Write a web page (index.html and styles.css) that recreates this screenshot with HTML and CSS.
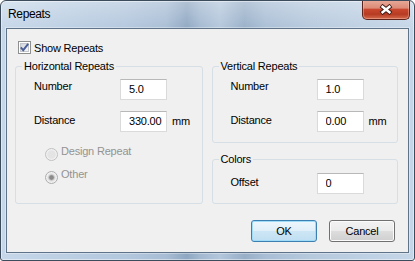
FILE: index.html
```html
<!DOCTYPE html>
<html lang="en">
<head>
  <meta charset="UTF-8" />
  <title>Repeats</title>
  <link rel="stylesheet" href="styles.css">
</head>
<body>
  <div class="window">
    <div class="titlebar">
      <span class="title">Repeats</span>
      <div class="close-btn">
        <svg width="14" height="11" viewBox="0 0 14 11">
          <path d="M2 1.5 L12 9.5 M12 1.5 L2 9.5" stroke="#3f1a14" stroke-width="4.4" fill="none"/>
          <path d="M2.6 2 L11.4 9 M11.4 2 L2.6 9" stroke="#fff" stroke-width="2.4" fill="none"/>
        </svg>
      </div>
    </div>

    <div class="client">
      <div class="check-row">
        <svg class="checkbox" width="13" height="13" viewBox="0 0 13 13">
          <defs>
            <linearGradient id="cbFill" x1="0" y1="0" x2="1" y2="1">
              <stop offset="0" stop-color="#cfd3d9"/>
              <stop offset="1" stop-color="#f9f9f9"/>
            </linearGradient>
          </defs>
          <rect x="0.5" y="0.5" width="12" height="12" fill="#fff" stroke="#8e8f8f"/>
          <rect x="2.5" y="2.5" width="8" height="8" fill="url(#cbFill)" stroke="#c3c7cd"/>
          <path d="M2.8 6.4 L5.2 9.2 L10.2 2.8" stroke="#4a5f97" stroke-width="1.9" fill="none"/>
        </svg>
        <span>Show Repeats</span>
      </div>

      <div class="columns">
        <div class="group group-horizontal">
          <span class="legend">Horizontal Repeats</span>
          <div class="fields">
            <span class="field-label">Number</span>
            <input class="textbox" type="text" value="5.0">
            <span></span>
            <span class="field-label low">Distance</span>
            <input class="textbox" type="text" value="330.00">
            <span class="unit">mm</span>
          </div>
          <div class="radios">
            <div class="radio-row">
              <svg class="radio" width="13" height="13" viewBox="0 0 13 13">
                <circle cx="6.5" cy="6.5" r="6" fill="#f1f1f1" stroke="#c0c0c0"/>
                <circle cx="6.5" cy="6.5" r="4.3" fill="#e4e4e4"/>
              </svg>
              <span>Design Repeat</span>
            </div>
            <div class="radio-row">
              <svg class="radio" width="13" height="13" viewBox="0 0 13 13">
                <circle cx="6.5" cy="6.5" r="6" fill="#f1f1f1" stroke="#acacac"/>
                <circle cx="6.5" cy="6.5" r="4.3" fill="#e2e2e2"/>
                <circle cx="6.5" cy="6.5" r="2.8" fill="#8a8a8a" stroke="#c9c9c9" stroke-width="0.8"/>
              </svg>
              <span>Other</span>
            </div>
          </div>
        </div>

        <div class="right-col">
          <div class="group group-vertical">
            <span class="legend">Vertical Repeats</span>
            <div class="fields">
              <span class="field-label">Number</span>
              <input class="textbox" type="text" value="1.0">
              <span></span>
              <span class="field-label low">Distance</span>
              <input class="textbox" type="text" value="0.00">
              <span class="unit">mm</span>
            </div>
          </div>
          <div class="group group-colors">
            <span class="legend">Colors</span>
            <div class="fields fields-colors">
              <span class="field-label low">Offset</span>
              <input class="textbox" type="text" value="0">
              <span></span>
            </div>
          </div>
        </div>
      </div>

      <div class="buttons">
        <button class="btn btn-default">OK</button>
        <button class="btn">Cancel</button>
      </div>
    </div>
  </div>
</body>
</html>
```

FILE: styles.css
```css
* {
  box-sizing: border-box;
}
body {
  margin: 0;
  background: #fff;
  font-family: "Liberation Sans", Arial, sans-serif;
  font-size: 11px;
  letter-spacing: -0.2px;
  color: #000;
}
.window {
  width: 415px;
  height: 261px;
  border: 1px solid #3d4c5c;
  border-radius: 6px 6px 3px 3px;
  padding: 0 5px 7px 5px;
  display: flex;
  flex-direction: column;
  overflow: hidden;
  background:
    linear-gradient(rgba(255,255,255,0.3), rgba(255,255,255,0) 30px),
    linear-gradient(90deg, #c6d7e9 0%, #bccfe3 15%, #b3c7dd 30%, #a8bdd5 40%, #8fa7c2 45%, #a2b8d0 48%, #b3c6db 53%, #98afc8 59%, #a9bed5 64%, #b6c9dd 75%, #bfd1e4 90%, #c5d6e8 100%);
  box-shadow: inset 0 0 0 1px rgba(255,255,255,0.45);
}
.titlebar {
  height: 27px;
  flex: none;
  display: flex;
  justify-content: space-between;
  align-items: flex-start;
}
.title {
  margin: 6px 0 0 2px;
  font-size: 12px;
  letter-spacing: -0.35px;
  line-height: 15px;
}
.close-btn {
  width: 48px;
  height: 20px;
  margin: -1px -1px 0 0;
  border: 1px solid #5e241b;
  border-top: none;
  border-radius: 0 0 5px 5px;
  background: linear-gradient(#e9ab9b 0%, #dc8b77 42%, #c8472e 50%, #b63b22 75%, #d56a4c 100%);
  box-shadow: inset 0 0 0 1px rgba(255,205,190,0.4);
  display: flex;
  align-items: center;
  justify-content: center;
}
.close-btn svg {
  display: block;
}
.client {
  flex: 1;
  background: #f0f0f0;
  border: 1px solid #607489;
  box-shadow: 0 0 0 1px rgba(255,255,255,0.35);
  padding: 12px 10px 0 8px;
}
.check-row {
  display: flex;
  align-items: center;
  gap: 3px;
  height: 13px;
  margin-left: 3px;
}
.checkbox,
.radio {
  display: block;
  flex: none;
}
.columns {
  display: flex;
  gap: 9px;
  margin-top: 12px;
}
.group {
  border: 1px solid #d5dfe5;
  border-radius: 3px;
}
.group-horizontal {
  width: 188px;
  height: 138px;
}
.right-col {
  width: 187px;
  display: flex;
  flex-direction: column;
  gap: 16px;
}
.group-vertical {
  height: 77px;
}
.group-colors {
  height: 45px;
}
.legend {
  display: table;
  margin: -7px 0 0 6px;
  padding: 0 2px;
  background: #f0f0f0;
  line-height: 13px;
}
.fields {
  display: grid;
  grid-template-columns: 86px 47px auto;
  grid-auto-rows: 21px;
  row-gap: 11px;
  margin: 6px 0 0 18px;
}
.fields-colors {
  margin-top: 7px;
}
.field-label {
  padding-top: 1px;
  line-height: 13px;
}
.field-label.low {
  padding-top: 3px;
}
.unit {
  padding: 4px 0 0 5px;
  line-height: 13px;
}
.textbox {
  width: 47px;
  height: 21px;
  margin: 0;
  padding: 0 0 1px 8px;
  border: 1px solid #dadada;
  border-top-color: #b8b8b8;
  background: #fff;
  font: inherit;
  letter-spacing: inherit;
  color: #000;
  outline: none;
}
.radios {
  display: flex;
  flex-direction: column;
  gap: 7px;
  margin: 13px 0 0 29px;
}
.radio-row {
  display: flex;
  align-items: flex-start;
  gap: 3px;
  line-height: 13px;
  color: #939393;
}
.radio {
  margin-top: 3px;
}
.buttons {
  display: flex;
  justify-content: flex-end;
  gap: 12px;
  margin: 16px 3px 0 0;
}
.btn {
  width: 66px;
  height: 22px;
  padding: 0;
  border: 1px solid #707070;
  border-radius: 3px;
  background: linear-gradient(#f2f2f2 0%, #ebebeb 48%, #dddddd 52%, #cfcfcf 100%);
  box-shadow: inset 0 0 0 1px #fbfbfb;
  font: inherit;
  letter-spacing: inherit;
  color: #000;
}
.btn-default {
  border-color: #3c7fb1;
  background: linear-gradient(#eef7fc 0%, #e0eff9 48%, #cde6f5 52%, #bfdff2 100%);
  box-shadow: inset 0 0 0 1px #9fdcf8;
}
```
